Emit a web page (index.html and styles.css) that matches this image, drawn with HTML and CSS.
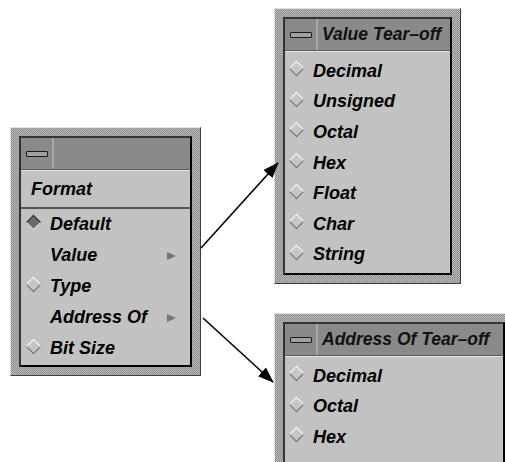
FILE: index.html
```html
<!DOCTYPE html>
<html lang="en">
<head>
  <meta charset="UTF-8" />
  <title>Format menu tear-offs</title>
  <link rel="stylesheet" href="styles.css">
</head>
<body>
  <div class="canvas">

    <div class="win win-format">
      <div class="inner">
        <div class="titlebar">
          <span class="tbtn"><i class="bar"></i></span>
          <span class="ttl"></span>
        </div>
        <div class="menu">
          <div class="label">Format</div>
          <div class="items">
            <div class="item"><span class="radio on"></span>Default</div>
            <div class="item"><span class="radio blank"></span>Value<span class="casc"></span></div>
            <div class="item"><span class="radio"></span>Type</div>
            <div class="item"><span class="radio blank"></span>Address Of<span class="casc"></span></div>
            <div class="item"><span class="radio"></span>Bit Size</div>
          </div>
        </div>
      </div>
    </div>

    <div class="win win-value">
      <div class="inner">
        <div class="titlebar">
          <span class="tbtn"><i class="bar"></i></span>
          <span class="ttl">Value Tear&#8211;off</span>
        </div>
        <div class="menu tear">
          <div class="item"><span class="radio"></span>Decimal</div>
          <div class="item"><span class="radio"></span>Unsigned</div>
          <div class="item"><span class="radio"></span>Octal</div>
          <div class="item"><span class="radio"></span>Hex</div>
          <div class="item"><span class="radio"></span>Float</div>
          <div class="item"><span class="radio"></span>Char</div>
          <div class="item"><span class="radio"></span>String</div>
        </div>
      </div>
    </div>

    <div class="win win-addr">
      <div class="inner">
        <div class="titlebar">
          <span class="tbtn"><i class="bar"></i></span>
          <span class="ttl">Address Of Tear&#8211;off</span>
        </div>
        <div class="menu tear">
          <div class="item"><span class="radio"></span>Decimal</div>
          <div class="item"><span class="radio"></span>Octal</div>
          <div class="item"><span class="radio"></span>Hex</div>
        </div>
      </div>
    </div>

    <svg class="arrows" width="505" height="462" viewBox="0 0 505 462">
      <defs>
        <marker id="head" markerWidth="16" markerHeight="12" refX="15" refY="6" orient="auto" markerUnits="userSpaceOnUse">
          <path d="M0,0 L16,6 L0,12 Z" fill="#000"/>
        </marker>
      </defs>
      <line x1="201" y1="248" x2="278" y2="163" stroke="#000" stroke-width="1.6" marker-end="url(#head)"/>
      <line x1="203" y1="318" x2="273" y2="382" stroke="#000" stroke-width="1.6" marker-end="url(#head)"/>
    </svg>

  </div>
</body>
</html>
```

FILE: styles.css
```css
body { margin: 0; background: #fff; font-family: "Liberation Sans", Arial, sans-serif; }
.canvas { position: relative; width: 505px; height: 462px; overflow: hidden; }

.win {
  position: absolute;
  box-sizing: border-box;
  padding: 8px;
  border: 1px solid;
  border-color: #e0e0e0 #3c3c3c #3c3c3c #e0e0e0;
  background: repeating-conic-gradient(#8c8c8c 0 25%, #bcbcbc 0 50%) 0 0 / 2px 2px;
}
.win-format { left: 10px; top: 127px; width: 191px; height: 249px; }
.win-value { left: 274px; top: 8px; width: 187px; height: 276px; }
.win-addr { left: 274px; top: 313px; width: 240px; height: 160px; }

.inner {
  box-sizing: border-box;
  height: 100%;
  display: flex;
  flex-direction: column;
  border: 2px solid #000;
  border-top-color: #333;
  border-left-color: #333;
  background: #c2c2c2;
}

.titlebar {
  display: flex;
  height: 31px;
  flex: none;
  background: #8a8a8a;
  border-bottom: 1px solid #5a5a5a;
}
.tbtn {
  width: 31px;
  flex: none;
  display: flex;
  align-items: center;
  justify-content: center;
  border-right: 2px solid #a8a8a8;
}
.bar {
  width: 20px;
  height: 4px;
  border: 1px solid #1a1a1a;
  border-radius: 1px;
  background: #a0a0a0;
}
.ttl {
  padding-left: 4px;
  line-height: 31px;
  font-size: 17.5px;
  font-weight: bold;
  font-style: italic;
  color: #111;
  white-space: nowrap;
}

.menu {
  flex: 1;
  border-top: 1px solid #e6e6e6;
  font-size: 18px;
  font-weight: bold;
  font-style: italic;
  color: #000;
}
.label {
  height: 36px;
  line-height: 36px;
  padding-left: 10px;
  border-bottom: 2px solid #555;
}
.item {
  display: flex;
  align-items: center;
  height: 31px;
  padding-left: 5px;
  white-space: nowrap;
}
.tear { padding-top: 4px; }
.tear .item { height: 30.6px; padding-left: 4px; }

.radio {
  position: relative;
  width: 16px;
  height: 16px;
  margin-right: 8px;
  margin-top: -4px;
  flex: none;
}
.radio::before {
  content: "";
  position: absolute;
  left: 2px;
  top: 2px;
  width: 9px;
  height: 9px;
  transform: rotate(45deg);
  border: 1px solid;
  border-color: #fbfbfb #6a6a6a #6a6a6a #fbfbfb;
  background: #c6c6c6;
}
.radio.on::before {
  border-color: #2a2a2a #f0f0f0 #f0f0f0 #2a2a2a;
  background: #6a6a6a;
}
.radio.blank::before { display: none; }

.casc {
  margin-left: auto;
  margin-right: 14px;
  width: 0;
  height: 0;
  border-top: 4px solid transparent;
  border-bottom: 4px solid transparent;
  border-left: 9px solid #777;
}

.arrows { position: absolute; left: 0; top: 0; }
```
